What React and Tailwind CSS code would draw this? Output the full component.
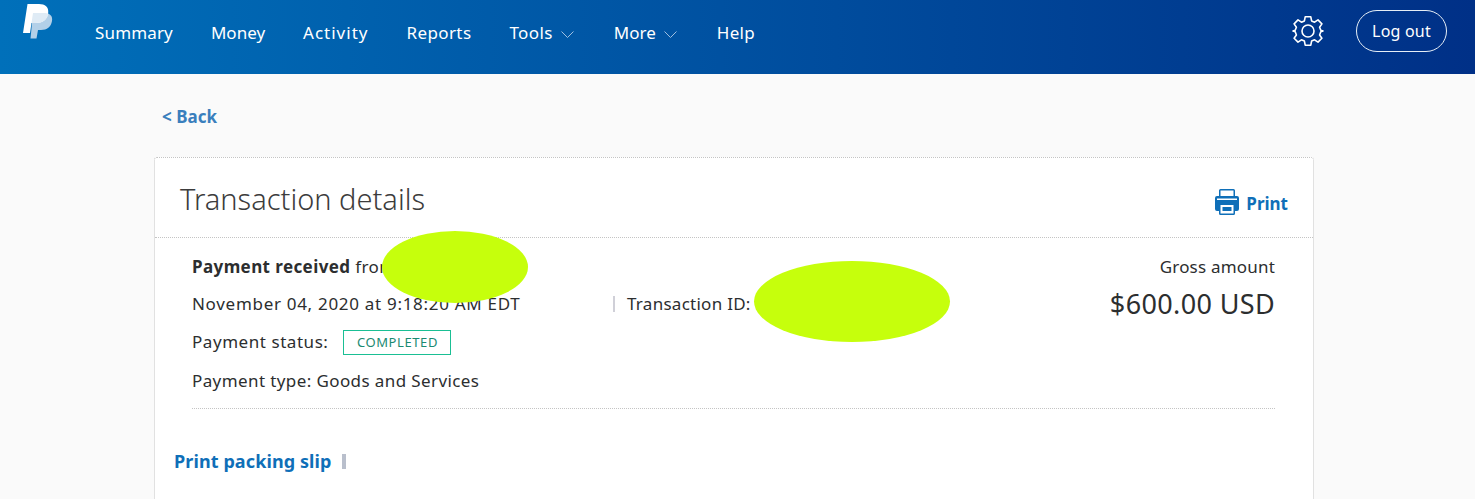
import React from "react";

const Chevron = () => (
  <svg width="13" height="7" viewBox="0 0 13 7" fill="none" stroke="#9fbfe0" strokeWidth="1" className="ml-[8px] mr-[2px] mt-[2px]">
    <path d="M0.5 0.5 L6.5 6.5 L12.5 0.5" />
  </svg>
);

const Logo = () => (
  <svg width="30" height="38" viewBox="0 0 30 38" className="absolute left-[23px] top-[2px]">
    <path d="M10 11 H21 C27 11 30 14 29 19 C28 25 24 28 18 28 H15 L13.5 36.5 H7.5 Z" fill="#b3d0e8" />
    <path d="M4.5 2 H16 C22 2 26 5 25.2 11 C24.3 18 19 21 13 21 H8.5 L7 31 H0 Z" fill="#ffffff" />
    <path d="M10 11 H21 C23 11 24.3 11.3 25.3 11.8 C24.3 18 19 21 13 21 H8.5 Z" fill="#dfebf5" />
  </svg>
);

const Gear = () => (
  <svg width="32" height="32" viewBox="0 0 32 32" fill="none" stroke="#ffffff" strokeWidth="1.6" strokeLinejoin="round">
    <circle cx="16" cy="16" r="6" />
    <path d="M13.2 1.8 H18.8 L19.6 5.9 L22.6 7.2 L26 4.9 L29.9 8.9 L27.6 12.2 L28.8 15.2 L31 16 L28.8 16.8 L27.6 20 L29.9 23.2 L26 27.1 L22.6 24.8 L19.6 26.1 L18.8 30.2 H13.2 L12.4 26.1 L9.4 24.8 L6 27.1 L2.1 23.2 L4.4 20 L3.2 16.8 L1 16 L3.2 15.2 L4.4 12.2 L2.1 8.9 L6 4.9 L9.4 7.2 L12.4 5.9 Z" />
  </svg>
);

const Printer = () => (
  <svg width="24" height="26" viewBox="0 0 24 26" fill="#0f6fb8">
    <path fillRule="evenodd" d="M4 1.5 A1.5 1.5 0 0 1 5.5 0 H18.5 A1.5 1.5 0 0 1 20 1.5 V7 H22 A2 2 0 0 1 24 9 V20 A2 2 0 0 1 22 22 H20 V24.5 A1.5 1.5 0 0 1 18.5 26 H5.5 A1.5 1.5 0 0 1 4 24.5 V22 H2 A2 2 0 0 1 0 20 V9 A2 2 0 0 1 2 7 H4 Z M5.5 1.5 V7 H18.5 V1.5 Z M2 9.5 V11 H22 V9.5 Z M5.5 16 V24.5 H18.5 V16 Z" />
    <rect x="7.5" y="18" width="9" height="4" />
  </svg>
);

export default function App() {
  const font = { fontFamily: "'Noto Sans', sans-serif" };
  return (
    <div className="h-[499px] overflow-hidden bg-[#fafafa] text-[#2c2e2f]" style={font}>
      <header className="relative flex h-[74px] items-start bg-gradient-to-r from-[#0070ba] to-[#003087] pl-[95px] pr-[28px] text-white">
        <Logo />
        <nav className="flex h-[66px] items-center gap-[38px] text-[17px]">
          <a className="tracking-[0.15px]">Summary</a>
          <a>Money</a>
          <a className="tracking-[1px]">Activity</a>
          <a className="tracking-[0.4px]">Reports</a>
          <a className="flex items-center tracking-[0.4px]">Tools<Chevron /></a>
          <a className="flex items-center">More<Chevron /></a>
          <a className="tracking-[0.25px]">Help</a>
        </nav>
        <div className="ml-auto flex h-[62px] items-center gap-[32px]">
          <Gear />
          <button className="flex h-[42px] w-[91px] items-center justify-center rounded-full border border-[#e6eef6] text-[16px] tracking-[0.2px]">Log out</button>
        </div>
      </header>

      <main className="pl-[154px] pr-[161px]">
        <div className="flex h-[83px] items-center pl-[8px] pt-[3px] text-[17px] font-bold text-[#3a7fbd]">&lt; Back</div>
        <section className="h-[400px] rounded-t-[3px] border border-dotted border-[#c4c4c4] bg-white">
          <div className="flex h-[80px] items-center justify-between border-b border-dotted border-[#c4c4c4] pl-[25px] pr-[25px]">
            <h1 className="mt-[2px] text-[29px] font-light text-[#3c3c3c]">Transaction details</h1>
            <div className="mt-[10px] flex items-center gap-[7px] text-[17px] font-bold text-[#0f6fb8]">
              <span className="-mt-[1px]"><Printer /></span><span className="mt-[3px]">Print</span>
            </div>
          </div>

          <div className="relative ml-[37px] mr-[38px] flex h-[171px] justify-between border-b border-dotted border-[#c4c4c4] pt-[17px] text-[17px]">
            <div className="flex flex-col">
              <div className="h-[24px] leading-[24px] tracking-[0.4px]"><b className="font-bold">Payment received</b> from</div>
              <div className="mt-[13px] flex h-[24px] items-center leading-[24px]">
                <span className="w-[421px] tracking-[0.7px]">November 04, 2020 at 9:18:20 AM EDT</span>
                <span className="mr-[12px] h-[16px] w-[2px] bg-[#d0d0d8]" />
                <span className="tracking-[0.27px]">Transaction ID:</span>
              </div>
              <div className="mt-[14px] flex h-[24px] items-center leading-[24px]">
                <span className="tracking-[0.55px]">Payment status:</span>
                <span className="ml-[15px] flex h-[25px] w-[108px] items-center justify-center border border-[#1abf94] text-[13px] tracking-[0.6px] text-[#1a8a72]">COMPLETED</span>
              </div>
              <div className="mt-[15px] h-[24px] leading-[24px] tracking-[0.4px]">Payment type: Goods and Services</div>
            </div>
            <div className="flex flex-col items-end">
              <div className="h-[24px] leading-[24px] tracking-[0.2px]">Gross amount</div>
              <div className="mt-[8px] text-[27px] leading-[34px] tracking-[0.36px]">$600.00 USD</div>
            </div>
            <span className="absolute left-[190px] top-[-7px] h-[72px] w-[146px] rounded-[50%] bg-[#c6ff0c]" />
            <span className="absolute left-[562px] top-[23px] h-[81px] w-[196px] rounded-[50%] bg-[#c6ff0c]" />
          </div>

          <div className="flex items-center pl-[19px] pt-[39px] text-[18px] font-bold tracking-[0.1px] text-[#0f6fb8]">
            <span>Print packing slip</span>
            <span className="ml-[10px] h-[15px] w-[4px] bg-[#b9bfcc]" />
          </div>
        </section>
      </main>
    </div>
  );
}
